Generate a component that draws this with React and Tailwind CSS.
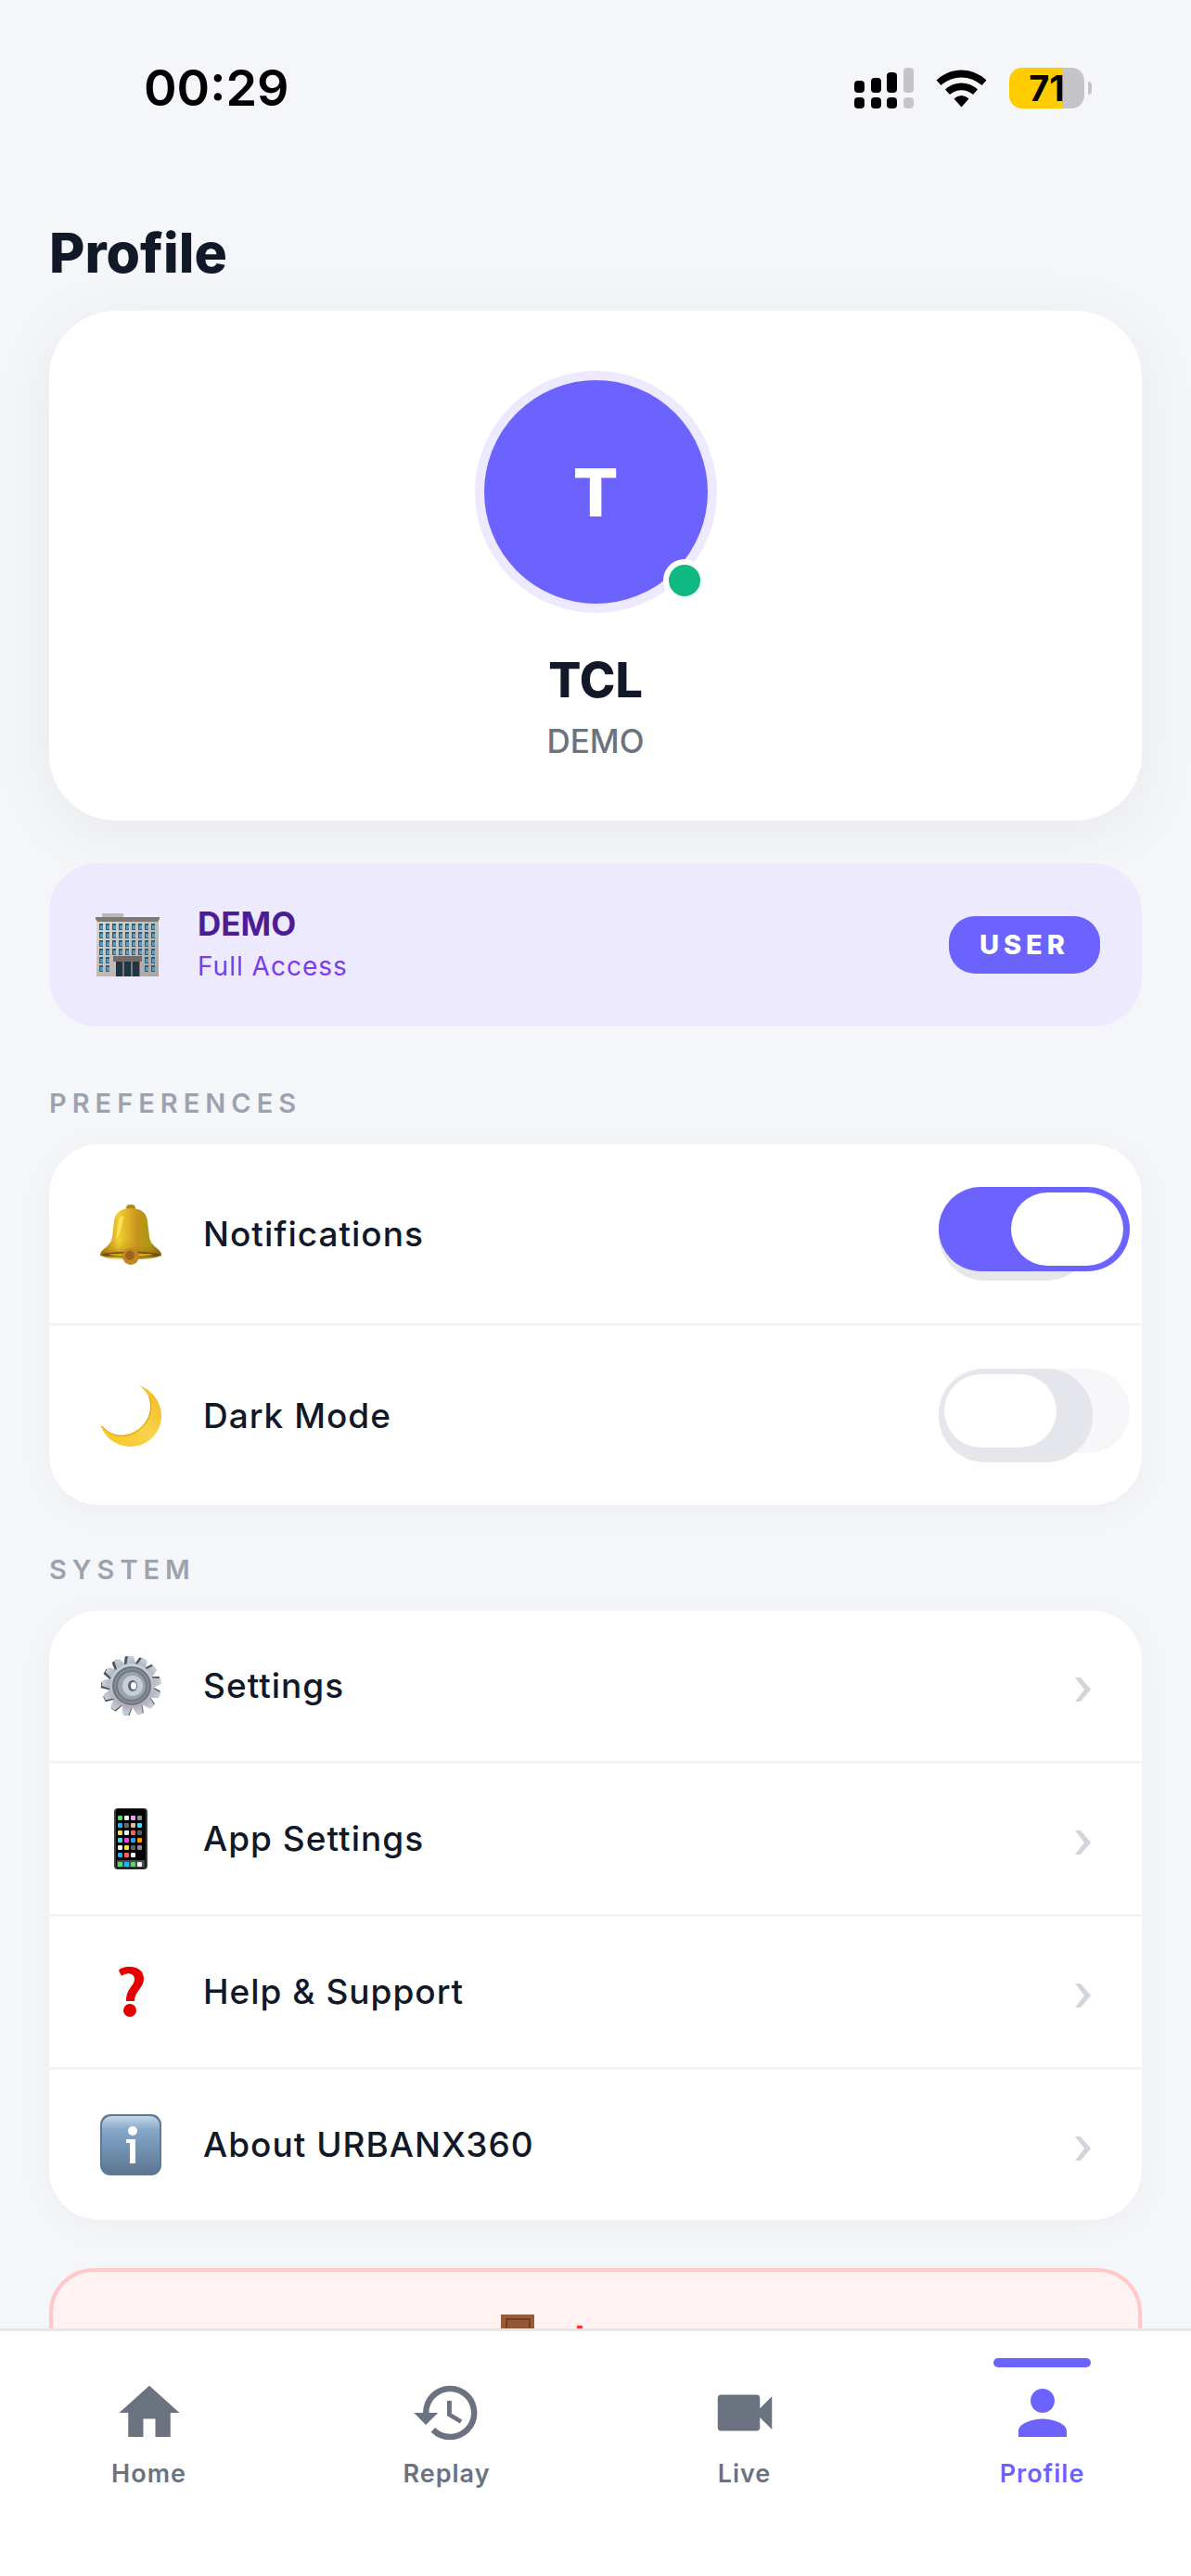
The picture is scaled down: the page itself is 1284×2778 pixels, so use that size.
import { useState } from "react"
import { MdHistory, MdHome, MdPerson, MdVideocam } from "react-icons/md"

const BuildingIcon = () => (
  <svg viewBox="0 0 72 72" className="size-[72px] shrink-0" aria-hidden="true">
    <defs>
      <linearGradient id="wall" x1="0" y1="0" x2="1" y2="1">
        <stop offset="0" stopColor="#dcd8ce" />
        <stop offset="1" stopColor="#a5a3a4" />
      </linearGradient>
    </defs>
    <rect x="9" y="2" width="23" height="6" fill="#bbb9b7" />
    <rect x="3" y="9" width="67" height="61" fill="url(#wall)" />
    <path d="M2 6h69v2l-2 3H4L2 8z" fill="#807873" />
    {[13, 22, 31, 40, 49, 58].map((y) =>
      [6, 13, 20, 27, 34, 41, 48, 55, 62].map((x, i) =>
        y > 40 && i > 1 && i < 7 ? null : (
          <g key={`${x}-${y}`}>
            <rect x={x} y={y} width="4" height="7" fill="#2f5d78" />
            <rect x={x + 1} y={y + 2} width="3" height="4" fill="#5a9cc0" />
          </g>
        )
      )
    )}
    <rect x="21" y="48" width="31" height="6" fill="#716a6b" />
    <rect x="24" y="54" width="26" height="16" fill="#77797d" />
    <path d="M24 54h7v16h-7zM33 54h7v16h-7zM42 54h7v16h-7z" fill="#203441" />
  </svg>
)

const BellIcon = () => (
  <svg viewBox="0 0 66 66" className="size-[66px]" aria-hidden="true">
    <defs>
      <linearGradient id="bell" x1="0" x2="1">
        <stop offset="0" stopColor="#a8740f" />
        <stop offset="0.3" stopColor="#f3d030" />
        <stop offset="0.6" stopColor="#c8941d" />
        <stop offset="0.82" stopColor="#a9960f" />
        <stop offset="1" stopColor="#7c5a10" />
      </linearGradient>
      <linearGradient id="bellRim" x1="0" y1="0" x2="0" y2="1">
        <stop offset="0" stopColor="#d9ae22" stopOpacity="0" />
        <stop offset="1" stopColor="#8c5c12" />
      </linearGradient>
    </defs>
    <rect x="28" y="1" width="10" height="8" rx="4" fill="#b38a17" />
    <path
      d="M33 5c11 0 17 5 18 14l2 17c1 6 4 9 9 13 3 2 4 5 4 7-8 4-20 4-33 4S8 60 0 56c0-2 1-5 4-7 5-4 8-7 9-13l2-17C16 10 22 5 33 5z"
      fill="url(#bell)"
    />
    <path d="M10 42c14-4 32-4 46 0l6 7c3 2 4 5 4 7H0c0-2 1-5 4-7z" fill="url(#bellRim)" opacity="0.6" />
    <ellipse cx="33" cy="55" rx="31" ry="3" fill="#6f480d" />
    <path d="M8 55c8-2 42-2 50 0-10 3-40 3-50 0z" fill="#d0a51c" />
    <circle cx="33" cy="57" r="9" fill="#c4861f" />
    <circle cx="32" cy="56" r="5" fill="#9b6420" />
    <path d="M22 14c-4 8-3 16-5 24 4-3 7-15 8-25z" fill="#ffe766" opacity="0.8" />
  </svg>
)

const MoonIcon = () => (
  <svg viewBox="0 0 66 66" className="size-[66px]" aria-hidden="true">
    <defs>
      <linearGradient id="moon" x1="0" y1="1" x2="1" y2="0">
        <stop offset="0" stopColor="#f6c51d" />
        <stop offset="0.5" stopColor="#f8d44b" />
        <stop offset="1" stopColor="#f0b81f" />
      </linearGradient>
    </defs>
    <path
      d="M42 0c14 5 24 18 24 33 0 18-15 33-33 33C18 66 5 57 0 42c8 10 18 13 28 11 19-4 31-24 24-41-2-5-5-8-10-12z"
      fill="url(#moon)"
    />
    <path d="M2 44c8 9 17 12 27 10 19-4 30-23 24-41" fill="none" stroke="#d89f16" />
  </svg>
)

const teeth = [0, 28, 55, 83, 111, 138, 166, 194, 222, 249, 277, 305, 332]

const GearIcon = () => (
  <svg viewBox="0 0 66 66" className="size-[66px]" aria-hidden="true">
    <defs>
      <linearGradient id="gear" x1="0" y1="0" x2="0" y2="1">
        <stop offset="0" stopColor="#c2d3df" />
        <stop offset="1" stopColor="#b5adb8" />
      </linearGradient>
    </defs>
    {teeth.map((angle) => (
      <path key={angle} d="M27 11l2-10h6l3 10z" fill="#50565b" transform={`rotate(${angle - 4} 33 33)`} />
    ))}
    {teeth.map((angle) => (
      <path key={angle} d="M28 11l2-10h6l3 10z" fill="url(#gear)" transform={`rotate(${angle} 34 33)`} />
    ))}
    <circle cx="34" cy="33" r="24" fill="url(#gear)" />
    <circle cx="34" cy="33" r="20" fill="#858c92" stroke="#6d767d" strokeWidth="2" />
    <circle cx="34" cy="33" r="16" fill="#9ba3aa" stroke="#737a80" strokeWidth="2" />
    <circle cx="35" cy="33" r="11" fill="#c6ced9" />
    <ellipse cx="35" cy="33" rx="5" ry="6" fill="#5f6567" />
    <ellipse cx="36" cy="33" rx="3" ry="4" fill="#fff" />
  </svg>
)

const appColors = [
  ["#4be164", "#f3f3f3", "#e5a1f5", "#8e8e8e"],
  ["#1fb0f7", "#686868", "#e3bb8e", "#4fd8f5"],
  ["#f7df4f", "#f0f0f0", "#f8605b", "#5a5a5a"],
  ["#4fd9e4", "#e448e8", "#1aa7f5", "#ff9500"],
  ["#f3f3f3", "#f7df4f", "#5f5f5f", "#8e8e8e"],
  ["#1fb0f7", "#f8605b", "#f3f3f3", "#000"],
]

const PhoneIcon = () => (
  <svg viewBox="0 0 66 66" className="size-[66px]" aria-hidden="true">
    <rect x="15" y="0" width="36" height="66" rx="4" fill="#3a3d3c" />
    <rect x="17" y="1" width="32" height="64" rx="3" fill="#000" />
    <rect x="18" y="56" width="30" height="8" rx="1" fill="#4b4b4b" />
    {appColors.map((row, r) =>
      row.map((color, c) => (
        <rect key={`${r}-${c}`} x={19 + c * 7} y={8 + r * 8} width="5" height="5" rx="1" fill={color} />
      ))
    )}
    {["#4be164", "#18b9f2", "#4be164", "#f3f3f3"].map((color, c) => (
      <rect key={c} x={19 + c * 7} y="58" width="5" height="5" rx="1" fill={color} />
    ))}
  </svg>
)

const QuestionIcon = () => (
  <svg viewBox="0 0 66 66" className="size-[66px]" aria-hidden="true">
    <path
      d="M20 10c2-3 6-4 12-4 9 0 15 5 15 13 0 10-10 13-10 24h-9c0-14 9-16 9-24 0-6-8-8-14-3z"
      fill="#e50000"
    />
    <circle cx="32" cy="53" r="7" fill="#e50000" />
  </svg>
)

const InfoIcon = () => (
  <svg viewBox="0 0 66 66" className="size-[66px]" aria-hidden="true">
    <defs>
      <linearGradient id="info" x1="0" y1="0" x2="0" y2="1">
        <stop offset="0" stopColor="#c5d7e6" />
        <stop offset="0.25" stopColor="#84a5c7" />
        <stop offset="0.5" stopColor="#7697b7" />
        <stop offset="1" stopColor="#5d7690" />
      </linearGradient>
    </defs>
    <rect x="0" y="0" width="66" height="66" rx="11" fill="#5b7a96" />
    <rect x="2" y="2" width="62" height="62" rx="10" fill="url(#info)" />
    <circle cx="35" cy="18" r="5" fill="#fff" />
    <path d="M28 27h10v26h-6V31h-4z" fill="#fff" />
  </svg>
)

const DoorIcon = () => (
  <svg viewBox="0 0 54 54" className="size-[54px]" aria-hidden="true">
    <rect x="9" y="0" width="36" height="54" fill="#9a5b38" />
    <rect x="15" y="5" width="25" height="20" fill="#965834" stroke="#6d3f28" strokeWidth="2" />
    <rect x="15" y="30" width="25" height="20" fill="#965834" stroke="#6d3f28" strokeWidth="2" />
  </svg>
)

const SignalIcon = () => (
  <svg viewBox="0 0 64 45" className="h-[45px] w-[64px]" aria-hidden="true">
    <rect x="0" y="14" width="11" height="13" rx="4" />
    <rect x="18" y="11" width="11" height="16" rx="4" />
    <rect x="35" y="5" width="11" height="22" rx="4" />
    <rect x="53" y="0" width="11" height="27" rx="4" fill="#c5c4c9" />
    <rect x="0" y="32" width="11" height="12" rx="4" />
    <rect x="18" y="32" width="11" height="12" rx="4" />
    <rect x="35" y="32" width="11" height="12" rx="4" />
    <rect x="53" y="32" width="11" height="12" rx="4" fill="#c5c4c9" />
  </svg>
)

const WifiIcon = () => (
  <svg viewBox="0 0 55 41" className="h-[41px] w-[55px]" aria-hidden="true">
    <path d="M27.500 0.500A40 40 0 0 1 54.500 11.500L49.500 17A32.500 32.500 0 0 0 5.500 17L0.500 11.500A40 40 0 0 1 27.500 0.500z" />
    <path d="M27.500 14.500A27 27 0 0 1 45 21.500L40 27A19 19 0 0 0 15 27L10 21.500A27 27 0 0 1 27.500 14.500z" />
    <path d="M27.500 28A13 13 0 0 1 35.500 31.500L27.500 40.500L19.500 31.500A13 13 0 0 1 27.500 28z" />
  </svg>
)

const StatusBar = () => (
  <header className="flex shrink-0 items-center justify-between pt-[60px] pr-[107px] pl-[155px] text-black">
    <p className="text-[54px] leading-[70px] font-semibold">00:29</p>
    <div className="flex items-center gap-6">
      <SignalIcon />
      <WifiIcon />
      <div className="flex items-center gap-1">
        <div className="flex h-[44px] w-[81px] items-center justify-center rounded-[14px] bg-linear-to-r from-[#ffcc00] from-71% to-[#c5c4c9] to-71% text-[38px] leading-[44px] font-bold">
          71
        </div>
        <div className="h-[14px] w-1 rounded-r-full bg-[#c5c4c9]" />
      </div>
    </div>
  </header>
)

const SectionTitle = ({ children }) => (
  <h2 className="mt-[52px] mb-[26px] text-[29px] leading-[36px] font-semibold tracking-[6px] text-[#9ca3af] uppercase">
    {children}
  </h2>
)

const Toggle = ({ id, checked, onChange }) => (
  <span className="relative h-[101px] w-[166px] rounded-[50px] bg-[#e5e7eb]">
    <input
      id={id}
      type="checkbox"
      role="switch"
      checked={checked}
      onChange={onChange}
      className={`absolute top-0 left-0 h-[91px] w-[206px] cursor-pointer appearance-none rounded-full ${
        checked ? "bg-[#6c63ff]" : "bg-[#e4e4ee]/30"
      }`}
    />
    <span
      className={`pointer-events-none absolute top-[6px] h-[79px] w-[121px] rounded-full bg-white ${
        checked ? "left-[78px]" : "left-[6px]"
      }`}
    />
  </span>
)

const ToggleRow = ({ id, icon, label, checked, onChange }) => (
  <div className="flex items-center gap-[45px] py-[46px] pr-[53px] pl-[55px]">
    {icon}
    <label htmlFor={id} className="flex-1 text-[37px] leading-[48px] font-medium tracking-[1px]">
      {label}
    </label>
    <Toggle id={id} checked={checked} onChange={onChange} />
  </div>
)

const LinkRow = ({ icon, label }) => (
  <button className="flex w-full cursor-pointer items-center gap-[45px] py-[48px] pr-[55px] pl-[55px] text-left">
    {icon}
    <span className="flex-1 text-[37px] leading-[48px] font-medium tracking-[1px]">{label}</span>
    <svg viewBox="0 0 17 26" className="mt-2 h-[26px] w-[17px] fill-gray-300" aria-hidden="true">
      <path d="M0 0h6l11 13L6 26H0l10-13z" />
    </svg>
  </button>
)

const tabs = [
  { label: "Home", Icon: MdHome },
  { label: "Replay", Icon: MdHistory },
  { label: "Live", Icon: MdVideocam },
  { label: "Profile", Icon: MdPerson },
]

const BottomNav = ({ active }) => (
  <nav className="grid shrink-0 grid-cols-4 border-t-[3px] border-gray-200 bg-white pb-[93px]">
    {tabs.map(({ label, Icon }) => (
      <a
        key={label}
        href={`#${label.toLowerCase()}`}
        className={`relative flex flex-col items-center gap-[10px] pt-[49px] ${
          label === active ? "text-[#6c63ff]" : "text-[#6b7280]"
        }`}
      >
        {label === active && (
          <span className="absolute top-[29px] h-[10px] w-[105px] rounded-[5px] bg-[#6c63ff]" />
        )}
        <Icon className="size-[78px]" />
        <span className="text-[27px] leading-[34px] font-semibold tracking-[1px]">{label}</span>
      </a>
    ))}
  </nav>
)

const App = () => {
  const [notifications, setNotifications] = useState(true)
  const [darkMode, setDarkMode] = useState(false)

  return (
    <div className="flex h-screen flex-col bg-[#f4f6fa] font-[Inter,'Liberation_Sans',sans-serif] text-[#111827]">
      <StatusBar />

      <main className="min-h-0 flex-1 overflow-y-auto px-[53px] pt-[107px] [scrollbar-width:none]">
        <h1 className="mb-[26px] text-[59px] leading-[72px] font-extrabold">Profile</h1>

        <section className="flex flex-col items-center rounded-[72px] bg-white pt-[65px] pb-[64px] shadow-[0_12px_72px_rgba(0,0,0,0.06)]">
          <div className="relative flex size-[261px] items-center justify-center rounded-full border-[10px] border-[#ede9fe] bg-[#6c63ff] text-[72px] font-extrabold text-white">
            T
            <span className="absolute right-[2px] bottom-[2px] size-[46px] rounded-full border-[6px] border-white bg-[#10b981]" />
          </div>
          <p className="mt-[41px] text-[52px] leading-[64px] font-extrabold">TCL</p>
          <p className="mt-[11px] text-[35px] leading-[44px] font-medium text-[#6b7280]">DEMO</p>
        </section>

        <section className="mt-[46px] flex items-center gap-[40px] rounded-[52px] bg-[#ede9fe] py-[42px] pr-[45px] pl-[48px]">
          <BuildingIcon />
          <div className="flex-1 leading-[46px]">
            <p className="text-[35px] font-bold text-[#4c1d95]">DEMO</p>
            <p className="text-[28px] tracking-[1px] text-[#7c3aed]">Full Access</p>
          </div>
          <span className="rounded-[28px] bg-[#6c63ff] px-[33px] text-[29px] leading-[62px] font-extrabold tracking-[5px] text-white">
            USER
          </span>
        </section>

        <div className="pt-[13px]">
          <SectionTitle>Preferences</SectionTitle>
        </div>
        <section className="divide-y-[3px] divide-gray-100 rounded-[54px] bg-white shadow-[0_6px_36px_rgba(0,0,0,0.04)]">
          <ToggleRow
            id="notifications"
            icon={<BellIcon />}
            label="Notifications"
            checked={notifications}
            onChange={() => setNotifications(!notifications)}
          />
          <ToggleRow
            id="dark-mode"
            icon={<MoonIcon />}
            label="Dark Mode"
            checked={darkMode}
            onChange={() => setDarkMode(!darkMode)}
          />
        </section>

        <SectionTitle>System</SectionTitle>
        <section className="divide-y-[3px] divide-gray-100 rounded-[54px] bg-white shadow-[0_6px_36px_rgba(0,0,0,0.04)]">
          <LinkRow icon={<GearIcon />} label="Settings" />
          <LinkRow icon={<PhoneIcon />} label="App Settings" />
          <LinkRow icon={<QuestionIcon />} label="Help & Support" />
          <LinkRow icon={<InfoIcon />} label="About URBANX360" />
        </section>

        <button className="mt-[52px] mb-[52px] flex w-full cursor-pointer items-center justify-center gap-[34px] rounded-[48px] border-[4px] border-[#ffc9c9] bg-[#fef2f2] py-[45px] text-[39px] leading-[56px] font-bold text-red-500">
          <DoorIcon />
          Logout
        </button>
      </main>

      <BottomNav active="Profile" />
    </div>
  )
}

export default App
